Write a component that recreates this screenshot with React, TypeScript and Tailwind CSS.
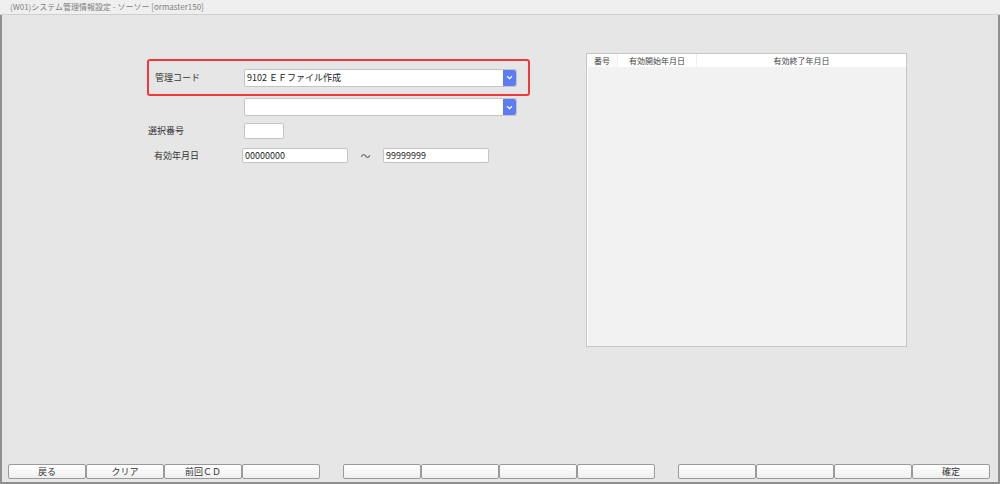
import React from "react";

const Chevron = () => (
  <svg width="7" height="5" viewBox="0 0 7 5" fill="none">
    <path d="M1 1.2 L3.5 3.6 L6 1.2" stroke="white" strokeWidth="1.3" />
  </svg>
);

const Select = ({ value }: { value?: string }) => (
  <div className="flex h-[18px] w-[273px] items-stretch rounded-[2px] border border-[#c4c4c4] bg-white">
    <div className="flex flex-1 items-center pl-[2px] text-[9px] text-[#222]">{value}</div>
    <div className="flex w-[13px] items-center justify-center rounded-r-[2px] bg-[#5b7cf3]">
      <Chevron />
    </div>
  </div>
);

const Btn = ({ label }: { label?: string }) => (
  <button className="flex h-[15px] w-[78px] items-center justify-center rounded-[2px] border border-[#9a9a9a] bg-gradient-to-b from-white to-[#efefef] text-[9px] leading-none text-[#333]">
    {label}
  </button>
);

const groups = [
  ["戻る", "クリア", "前回ＣＤ", ""],
  ["", "", "", ""],
  ["", "", "", "確定"],
];

export default function App() {
  return (
    <div className="flex h-[484px] w-[1000px] flex-col bg-[#e6e6e6] font-['Noto_Sans_CJK_JP',sans-serif]">
      {/* Title */}
      <div className="flex h-[15px] items-center border-b border-[#cfcfcf] bg-[#efefef] pl-[10px] text-[8px] text-[#808080]">
        (W01)システム管理情報設定 - ソーソー [ormaster150]
      </div>

      <div className="flex flex-1 flex-col border-x-2 border-b-2 border-[#8f8f8f]">
        <div className="flex flex-1">
          {/* Form */}
          <div className="ml-[145px] mt-[44px] flex w-[400px] flex-col">
            <div className="flex h-[37px] w-[383px] items-center rounded-[3px] border-2 border-[#f03a3a]">
              <div className="w-[95px] pl-[6px] text-[9px] text-[#333]">管理コード</div>
              <Select value="9102 ＥＦファイル作成" />
            </div>
            <div className="ml-[97px] mt-[2px]">
              <Select />
            </div>
            <div className="mt-[7px] flex items-center">
              <div className="w-[97px] pl-[1px] text-[9px] text-[#333]">選択番号</div>
              <div className="h-[16px] w-[40px] rounded-[2px] border border-[#c4c4c4] bg-white" />
            </div>
            <div className="mt-[9px] flex items-center">
              <div className="w-[95px] pl-[7px] text-[9px] text-[#333]">有効年月日</div>
              <div className="flex h-[15px] w-[106px] items-center rounded-[2px] border border-[#c4c4c4] bg-white pl-[2px] text-[9px] text-[#222]">
                00000000
              </div>
              <div className="w-[35px] text-center text-[10px] text-[#555]">～</div>
              <div className="flex h-[15px] w-[106px] items-center rounded-[2px] border border-[#c4c4c4] bg-white pl-[2px] text-[9px] text-[#222]">
                99999999
              </div>
            </div>
          </div>

          {/* Table */}
          <div className="ml-[39px] mt-[38px] flex h-[294px] w-[321px] flex-col border border-[#c6c6c6] bg-[#f2f2f2] shadow-[inset_1px_1px_0_#fff]">
            <div className="flex h-[13px] bg-white text-[8px] text-[#444]">
              <div className="flex w-[31px] items-center justify-center border-r border-[#efefef] bg-[#fbfbfb]">番号</div>
              <div className="flex w-[79px] items-center justify-center border-r border-[#efefef]">有効開始年月日</div>
              <div className="flex flex-1 items-center justify-center">有効終了年月日</div>
            </div>
          </div>
        </div>

        {/* Footer */}
        <div className="mb-[3px] ml-[6px] flex gap-[23px]">
          {groups.map((g, i) => (
            <div key={i} className="flex">
              {g.map((l, j) => (
                <Btn key={j} label={l} />
              ))}
            </div>
          ))}
        </div>
      </div>
    </div>
  );
}
